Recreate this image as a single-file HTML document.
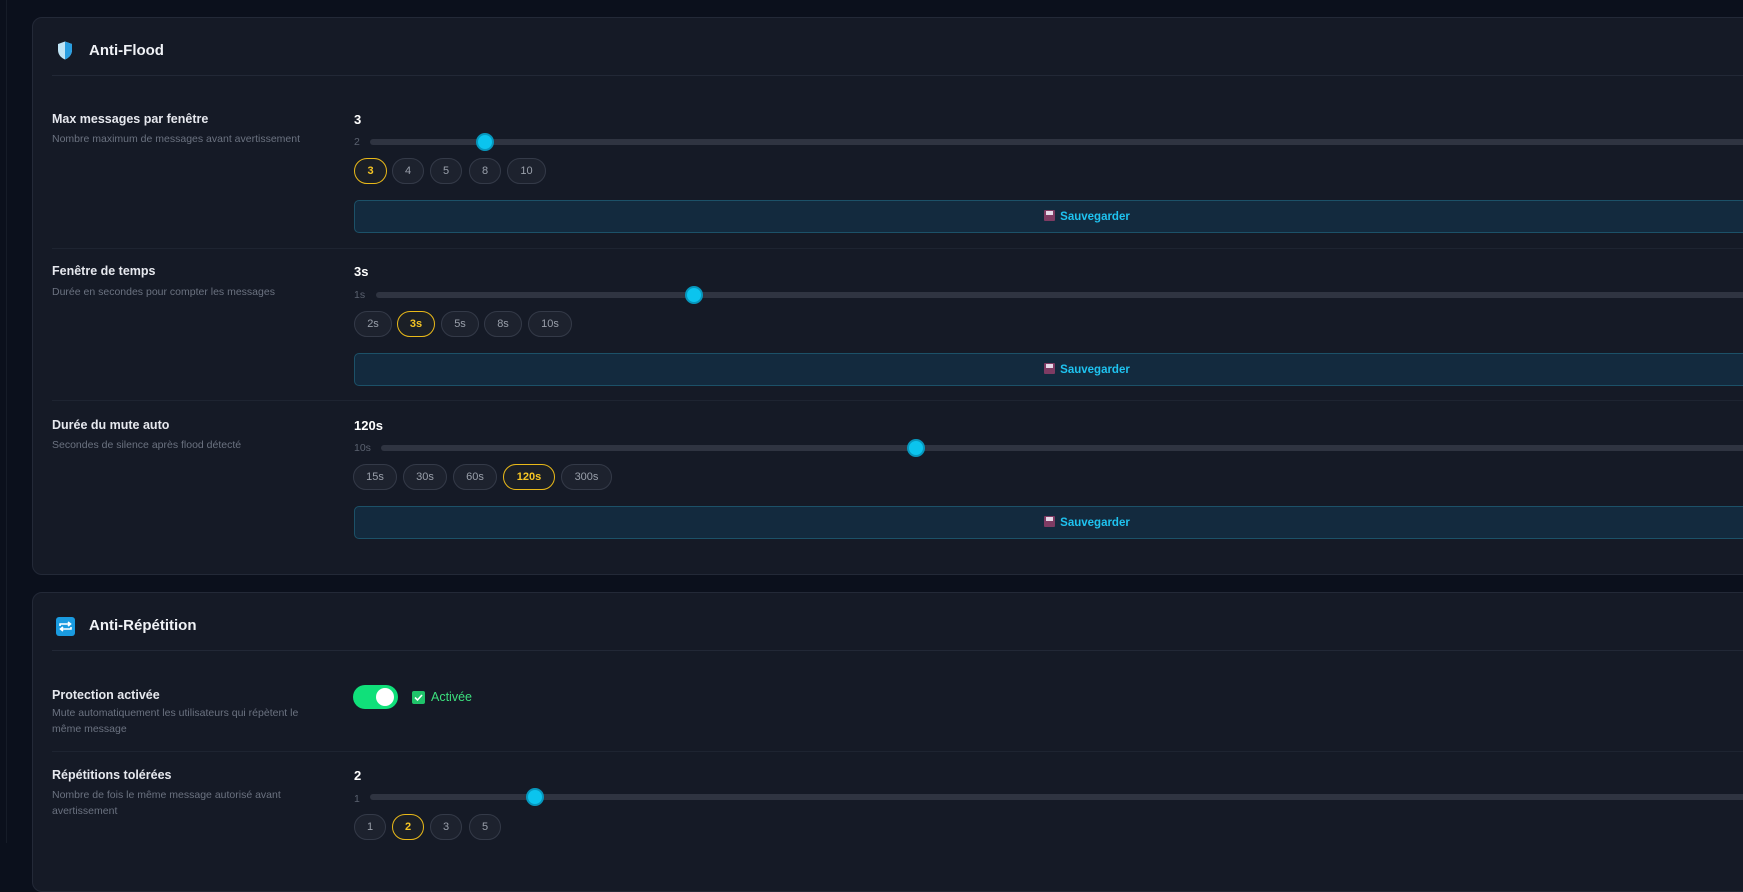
<!DOCTYPE html>
<html><head><meta charset="utf-8"><style>
*{box-sizing:border-box;margin:0;padding:0}
body{width:1743px;height:843px;overflow:hidden;background:#0b101c;font-family:"Liberation Sans",sans-serif;position:relative}
.side{position:absolute;left:0;top:0;width:7px;height:843px;border-right:1px solid #161c28}
.card{position:absolute;left:32px;width:1800px;background:#151a26;border:1px solid #232937;border-radius:10px}
.ab{position:absolute}
.title{font-weight:bold;color:#f0f2f6;font-size:15px}
.hr{position:absolute;left:52px;width:1750px;height:1px;background:#222836}
.lab{position:absolute;left:52px;color:#e6e8ee;font-weight:bold;font-size:12.5px}
.desc{position:absolute;left:52px;color:#6b7280;font-size:10.5px;line-height:16px;width:270px}
.val{position:absolute;left:354px;color:#fff;font-weight:bold;font-size:13px}
.min{position:absolute;left:354px;color:#5b6270;font-size:10.5px}
.track{position:absolute;height:6px;background:#2f3441;border-radius:3px;width:1500px}
.thumb{position:absolute;width:18px;height:18px;border-radius:50%;background:#0bc4ee;border:2px solid #0797bd}
.chip{position:absolute;height:26px;border:1px solid #343a48;background:#1d222e;border-radius:13px;color:#9aa0ab;font-size:11px;text-align:center;line-height:24px}
.chip.on{border-color:#e9b919;color:#f7c624;font-weight:bold;background:#1b1f26}
.btn{position:absolute;left:354px;width:1466px;height:33px;background:#132a3e;border:1px solid #1c5168;border-radius:5px;color:#1fc3f0;font-weight:bold;font-size:11.5px;text-align:center;line-height:33px}
.fl{display:inline-block;width:11px;height:11px;background:#7e3b63;border-radius:1px;vertical-align:-1px;margin-right:5px;position:relative}
.fl:after{content:"";position:absolute;left:2px;top:1px;width:7px;height:4px;background:#e5d9e8}
.sep{position:absolute;left:52px;width:1750px;height:1px;background:#1e2431}
</style></head><body>
<div class="side"></div>
<div class="card" style="top:17px;height:558px"></div>
<svg class="ab" style="left:57px;top:41px" width="16" height="19" viewBox="0 0 16 19"><path d="M8 0.5 L15 3 V9 C15 14 11.5 17 8 18.5 C4.5 17 1 14 1 9 V3 Z" fill="#bfe4f5"/><path d="M8 0.5 L15 3 V9 C15 14 11.5 17 8 18.5 Z" fill="#2a9ee0"/></svg>
<div class="ab title" style="left:89px;top:42px">Anti-Flood</div>
<div class="hr" style="top:75px"></div>

<div class="lab" style="top:112px">Max messages par fenêtre</div>
<div class="desc" style="top:131px">Nombre maximum de messages avant avertissement</div>
<div class="val" style="top:112px">3</div>
<div class="min" style="top:136px">2</div>
<div class="track" style="left:370px;top:139px"></div>
<div class="thumb" style="left:476px;top:133px"></div>
<div class="chip on" style="left:354px;top:158px;width:33px">3</div>
<div class="chip" style="left:392px;top:158px;width:32px">4</div>
<div class="chip" style="left:430px;top:158px;width:32px">5</div>
<div class="chip" style="left:469px;top:158px;width:32px">8</div>
<div class="chip" style="left:507px;top:158px;width:39px">10</div>
<div class="btn" style="top:200px"><span class="fl"></span>Sauvegarder</div>
<div class="sep" style="top:248px"></div>

<div class="lab" style="top:264px">Fenêtre de temps</div>
<div class="desc" style="top:284px">Durée en secondes pour compter les messages</div>
<div class="val" style="top:264px">3s</div>
<div class="min" style="top:289px">1s</div>
<div class="track" style="left:376px;top:292px"></div>
<div class="thumb" style="left:685px;top:286px"></div>
<div class="chip" style="left:354px;top:311px;width:38px">2s</div>
<div class="chip on" style="left:397px;top:311px;width:38px">3s</div>
<div class="chip" style="left:441px;top:311px;width:38px">5s</div>
<div class="chip" style="left:484px;top:311px;width:38px">8s</div>
<div class="chip" style="left:528px;top:311px;width:44px">10s</div>
<div class="btn" style="top:353px"><span class="fl"></span>Sauvegarder</div>
<div class="sep" style="top:400px"></div>

<div class="lab" style="top:418px">Durée du mute auto</div>
<div class="desc" style="top:437px">Secondes de silence après flood détecté</div>
<div class="val" style="top:418px">120s</div>
<div class="min" style="top:442px">10s</div>
<div class="track" style="left:381px;top:445px"></div>
<div class="thumb" style="left:907px;top:439px"></div>
<div class="chip" style="left:353px;top:464px;width:44px">15s</div>
<div class="chip" style="left:403px;top:464px;width:44px">30s</div>
<div class="chip" style="left:453px;top:464px;width:44px">60s</div>
<div class="chip on" style="left:503px;top:464px;width:52px">120s</div>
<div class="chip" style="left:561px;top:464px;width:51px">300s</div>
<div class="btn" style="top:506px"><span class="fl"></span>Sauvegarder</div>

<div class="card" style="top:592px;height:300px"></div>
<svg class="ab" style="left:56px;top:617px" width="19" height="19" viewBox="0 0 19 19"><rect width="19" height="19" rx="3" fill="#1a9be0"/><path d="M4 9 V7 H14 M12 5 L14.5 7 L12 9 M15 10 V12 H5 M7 10 L4.5 12 L7 14" stroke="#fff" stroke-width="1.6" fill="none"/></svg>
<div class="ab title" style="left:89px;top:617px">Anti-Répétition</div>
<div class="hr" style="top:650px"></div>

<div class="lab" style="top:688px">Protection activée</div>
<div class="desc" style="top:705px">Mute automatiquement les utilisateurs qui répètent le même message</div>
<div class="ab" style="left:353px;top:685px;width:45px;height:24px;border-radius:12px;background:#10e07a"></div>
<div class="ab" style="left:376px;top:688px;width:18px;height:18px;border-radius:50%;background:#fff"></div>
<div class="ab" style="left:412px;top:691px;width:13px;height:13px;border-radius:2px;background:#1fc46a"></div>
<svg class="ab" style="left:412px;top:691px" width="13" height="13"><path d="M3 6.5 L5.5 9 L10 4" stroke="#fff" stroke-width="1.6" fill="none"/></svg>
<div class="ab" style="left:431px;top:690px;color:#3ce07d;font-size:12.5px">Activée</div>
<div class="sep" style="top:751px"></div>

<div class="lab" style="top:768px">Répétitions tolérées</div>
<div class="desc" style="top:787px">Nombre de fois le même message autorisé avant avertissement</div>
<div class="val" style="top:768px">2</div>
<div class="min" style="top:793px">1</div>
<div class="track" style="left:370px;top:794px"></div>
<div class="thumb" style="left:526px;top:788px"></div>
<div class="chip" style="left:354px;top:814px;width:32px">1</div>
<div class="chip on" style="left:392px;top:814px;width:32px">2</div>
<div class="chip" style="left:430px;top:814px;width:32px">3</div>
<div class="chip" style="left:469px;top:814px;width:32px">5</div>
</body></html>
